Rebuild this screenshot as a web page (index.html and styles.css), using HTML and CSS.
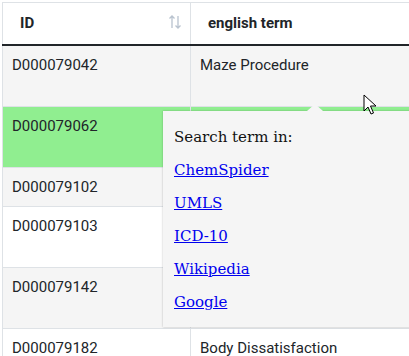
FILE: index.html
```html
<!DOCTYPE html>
<html lang="en">
<head>
    <meta charset="UTF-8">
    <title>MeSH terms</title>
    <link rel="stylesheet" href="styles.css">
</head>
<body>
    <div class="wrap">
        <table class="terms">
            <thead>
                <tr>
                    <th class="col-id">ID
                        <svg class="sort" width="14" height="16" viewBox="0 0 14 16">
                            <path d="M4 2 V14 M1.5 4.5 L4 2 L6.5 4.5" />
                            <path d="M10 2 V14 M7.5 11.5 L10 14 L12.5 11.5" />
                        </svg>
                    </th>
                    <th class="col-term">english term</th>
                </tr>
            </thead>
            <tbody>
                <tr class="tall"><td>D000079042</td><td>Maze Procedure</td></tr>
                <tr class="tall hit"><td>D000079062</td><td></td></tr>
                <tr><td>D000079102</td><td></td></tr>
                <tr class="tall"><td>D000079103</td><td></td></tr>
                <tr class="tall"><td>D000079142</td><td></td></tr>
                <tr class="tall"><td>D000079182</td><td>Body Dissatisfaction</td></tr>
            </tbody>
        </table>

        <!-- popup over the table -->
        <div class="popup">
            <p>Search term in:</p>
            <p><a href="#">ChemSpider</a></p>
            <p><a href="#">UMLS</a></p>
            <p><a href="#">ICD-10</a></p>
            <p><a href="#">Wikipedia</a></p>
            <p><a href="#">Google</a></p>
        </div>

        <svg class="cursor" width="14" height="22" viewBox="0 0 14 22">
            <path d="M1 1 L1 17 L5 13 L8 20 L10.5 19 L7.5 12 L13 12 Z" />
        </svg>
    </div>
</body>
</html>
```

FILE: styles.css
```css
html, body {
    margin: 0;
    padding: 0;
    background: #fff;
    overflow: hidden;
}
.wrap {
    position: relative;
    padding: 2px 0 0 2px;
    width: 409px;
    height: 356px;
    overflow: hidden;
}
.terms {
    width: 540px;
    border-collapse: collapse;
    font-family: Roboto, "Liberation Sans", sans-serif;
    font-size: 15px;
    color: #212529;
}
.terms th, .terms td {
    border: 1px solid #dee2e6;
    text-align: left;
    vertical-align: top;
    line-height: 22px;
}
.terms th {
    font-weight: bold;
    padding: 9px 10px 10px 17px;
    border-bottom: 2px solid #212529;
    position: relative;
}
.terms td {
    padding: 8px 10px 8px 9px;
}
.col-id {
    width: 160px;
}
.terms tbody tr:nth-child(odd) {
    background: #f5f5f5;
}
.terms tr.tall td {
    height: 44px;
}
.terms tr.hit td {
    background: #90ee90;
}
.sort {
    position: absolute;
    right: 8px;
    top: 11px;
    fill: none;
    stroke: #b9c3cf;
    stroke-width: 1.3;
}
.popup {
    position: absolute;
    left: 163px;
    top: 111px;
    width: 260px;
    padding: 10px 11px 8px 11px;
    background: #f5f5f5;
    box-shadow: 0 0 2px rgba(0, 0, 0, 0.25);
    font-family: "DejaVu Serif", serif;
    font-size: 15px;
    color: #111;
}
.popup::before {
    content: "";
    position: absolute;
    left: 144px;
    top: -7px;
    border-left: 8px solid transparent;
    border-right: 8px solid transparent;
    border-bottom: 7px solid #f5f5f5;
}
.popup p {
    margin: 0;
    line-height: 33px;
}
.popup a {
    color: #0000ee;
}
.cursor {
    position: absolute;
    left: 363px;
    top: 94px;
    fill: #fff;
    stroke: #000;
    stroke-width: 1;
}
```
